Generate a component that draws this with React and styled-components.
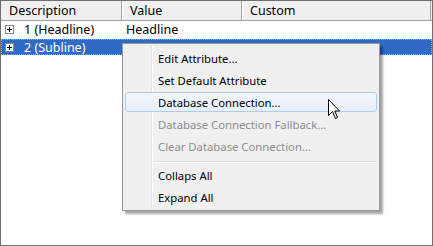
import React from "react";
import styled, { createGlobalStyle } from "styled-components";

const Global = createGlobalStyle`
  html, body { margin: 0; padding: 0; background: #fff; }
  body { font-family: "Noto Sans", "Open Sans", sans-serif; font-size: 12px; }
`;

const Frame = styled.div`
  position: relative;
  width: 431px;
  height: 244px;
  border: 1px solid #6f6f6f;
  background: #fff;
  overflow: hidden;
`;

const Header = styled.div`
  display: grid;
  grid-template-columns: 121px 120px 189px;
  height: 19px;
  border-bottom: 1px solid #a0a0a0;
  background: #f0f0f0;
`;

const HeadCell = styled.div`
  display: flex;
  align-items: center;
  padding-left: 7px;
  border-left: 1px solid ${(p) => (p.first ? "#f0f0f0" : "#fff")};
  border-right: 1px solid #a0a0a0;
  color: #000;
  font-size: 12.5px;
  white-space: nowrap;
`;

const Row = styled.div`
  display: grid;
  grid-template-columns: 121px 120px 190px;
  height: ${(p) => (p.selected ? "16px" : "17px")};
  background: ${(p) => (p.selected ? "#316ac5" : "#fff")};
  color: ${(p) => (p.selected ? "#fff" : "#000")};
  outline: ${(p) => (p.selected ? "1px dotted #e8a040" : "none")};
  outline-offset: -1px;
  margin-top: ${(p) => (p.selected ? "1px" : "0")};
`;

const Cell = styled.div`
  display: flex;
  align-items: center;
  padding-left: ${(p) => p.pad || 4}px;
  font-size: 12.5px;
  white-space: nowrap;
`;

const PlusBox = styled.span`
  position: relative;
  width: 7px;
  height: 7px;
  border: 1px solid #8a8a8a;
  background: #fff;
  margin-right: 10px;
  flex: none;
  &::before, &::after {
    content: "";
    position: absolute;
    background: #000;
  }
  &::before { left: 1px; top: 3px; width: 5px; height: 1px; }
  &::after { left: 3px; top: 1px; width: 1px; height: 5px; }
`;

const Menu = styled.div`
  position: absolute;
  left: 121px;
  top: 42px;
  width: 254px;
  padding: 3px 0 2px 2px;
  background: #f0f0f0;
  border: 1px solid #979797;
  box-shadow: 3px 3px 2px rgba(0, 0, 0, 0.35);
  display: flex;
  flex-direction: column;
  font-size: 11.3px;
`;

const Gutter = styled.div`
  position: absolute;
  left: 28px;
  top: 2px;
  bottom: 2px;
  width: 1px;
  background: #e2e2e2;
  border-right: 1px solid #fff;
`;

const Item = styled.div`
  position: relative;
  box-sizing: border-box;
  height: 20px;
  margin: 1px 2px 1px 0;
  display: flex;
  align-items: center;
  padding-left: 32px;
  color: ${(p) => (p.disabled ? "#8d8d8d" : "#000")};
  border: 1px solid ${(p) => (p.hot ? "#aeccf1" : "transparent")};
  border-radius: 3px;
  background: ${(p) => (p.hot ? "linear-gradient(#f2f6fc, #e8f0fb)" : "transparent")};
  white-space: nowrap;
`;

const Separator = styled.div`
  position: relative;
  height: 1px;
  margin: 4px 2px 1px 29px;
  background: #e0e0e0;
  border-bottom: 1px solid #fff;
`;

const Cursor = styled.svg`
  position: absolute;
  left: 327px;
  top: 98px;
`;

export default function App() {
  return (
    <>
      <Global />
      <Frame>
        <Header>
          <HeadCell first>Description</HeadCell>
          <HeadCell>Value</HeadCell>
          <HeadCell>Custom</HeadCell>
        </Header>
        <Row>
          <Cell pad={4}>
            <PlusBox />1 (Headline)
          </Cell>
          <Cell>Headline</Cell>
          <Cell />
        </Row>
        <Row selected>
          <Cell pad={4}>
            <PlusBox />2 (Subline)
          </Cell>
          <Cell />
          <Cell />
        </Row>

        <Menu>
          <Gutter />
          <Item>Edit Attribute...</Item>
          <Item>Set Default Attribute</Item>
          <Item hot>Database Connection...</Item>
          <Item disabled>Database Connection Fallback...</Item>
          <Item disabled>Clear Database Connection...</Item>
          <Separator />
          <Item>Collaps All</Item>
          <Item>Expand All</Item>
        </Menu>

        <Cursor width="13" height="21" viewBox="0 0 13 21">
          <path
            d="M0.5 0.5 L0.5 16.5 L4.5 12.5 L7.5 19.5 L9.5 18.5 L6.8 12 L11.5 12 Z"
            fill="#fff"
            stroke="#000"
            strokeWidth="1"
            strokeLinejoin="miter"
          />
        </Cursor>
      </Frame>
    </>
  );
}
